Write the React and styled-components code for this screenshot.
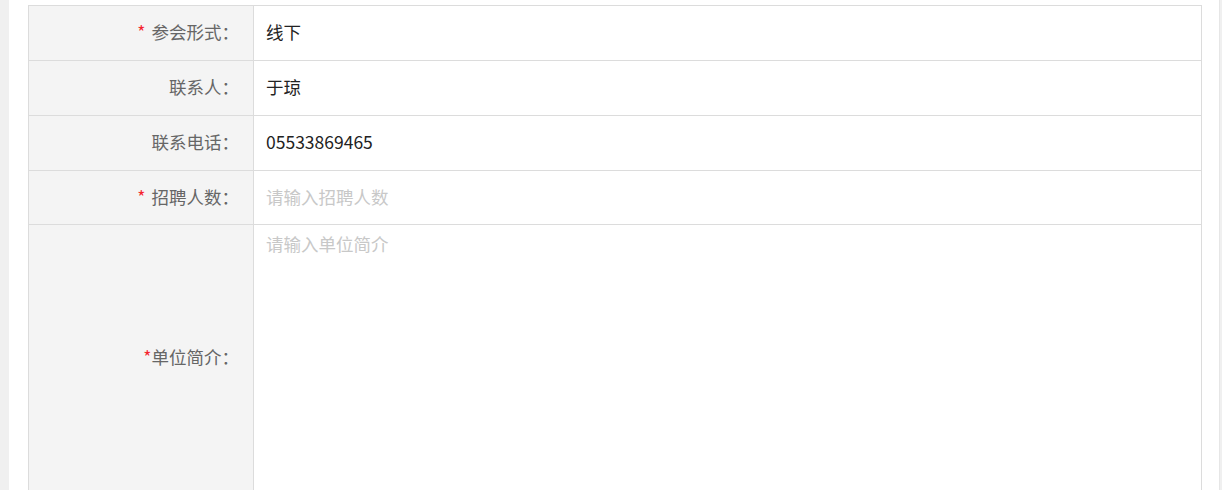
import styled, { createGlobalStyle } from "styled-components";

const GlobalStyle = createGlobalStyle`
  html, body {
    margin: 0;
    padding: 0;
    background: #f0f0f0;
    font-family: "Noto Sans CJK SC", "Noto Sans", sans-serif;
    overflow: hidden;
  }
`;

const Page = styled.div`
  margin-left: 9px;
  width: 1211px;
  height: 490px;
  background: #fff;
  border-right: 1px solid #e6e6e6;
  padding: 5px 19px 0;
  box-sizing: border-box;
  overflow: hidden;
`;

const Table = styled.table`
  width: 1174px;
  border-collapse: collapse;
  table-layout: fixed;
  font-size: 17.5px;

  td {
    border: 1px solid #dcdcdc;
    padding: 0;
  }
`;

const Label = styled.td`
  width: 225px;
  height: ${(p) => (p.$short ? "54px" : "55px")};
  background: #f4f4f4;
  color: #666;
  text-align: right;
  padding-right: 14px !important;
  padding-bottom: ${(p) => (p.$tall ? "7px" : "3px")} !important;
  box-sizing: border-box;
  vertical-align: middle;
  white-space: nowrap;
`;

const Star = styled.span`
  color: #f5222d;
  margin-right: ${(p) => (p.$tight ? "0" : "6px")};
`;

const Value = styled.td`
  padding: 0 12px 3px !important;
  color: #222;
  vertical-align: middle;
`;

const Input = styled.input`
  width: 100%;
  border: none;
  outline: none;
  font: inherit;
  color: #222;
  background: transparent;
  padding: 0;

  &::placeholder {
    color: #c8c8c8;
  }
`;

const TextCell = styled.td`
  height: 270px;
  padding: 0 !important;
  vertical-align: top;
`;

const TextArea = styled.textarea`
  display: block;
  width: 100%;
  height: 270px;
  box-sizing: border-box;
  border: none;
  outline: none;
  resize: none;
  font: inherit;
  padding: 6px 12px;
  color: #222;

  &::placeholder {
    color: #c8c8c8;
  }
`;

const rows = [
  { label: "参会形式", required: true, value: "线下" },
  { label: "联系人", value: "于琼" },
  { label: "联系电话", value: "05533869465" },
  { label: "招聘人数", required: true, placeholder: "请输入招聘人数", short: true },
];

export default function App() {
  return (
    <Page>
      <GlobalStyle />
      <Table>
        <tbody>
          {rows.map((r) => (
            <tr key={r.label}>
              <Label $short={r.short}>
                {r.required && <Star>*</Star>}
                {r.label}：
              </Label>
              <Value>
                {r.placeholder ? (
                  <Input placeholder={r.placeholder} />
                ) : (
                  r.value
                )}
              </Value>
            </tr>
          ))}
          <tr>
            <Label $tall>
              <Star $tight>*</Star>单位简介：
            </Label>
            <TextCell>
              <TextArea placeholder="请输入单位简介" />
            </TextCell>
          </tr>
        </tbody>
      </Table>
    </Page>
  );
}
